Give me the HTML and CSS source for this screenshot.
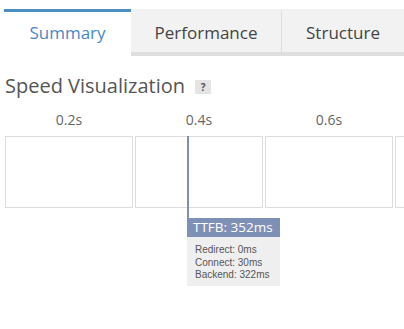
FILE: index.html
```html
<!DOCTYPE html>
<html>
<head>
<meta charset="utf-8">
<link rel="stylesheet" href="styles.css">
</head>
<body>
<div class="tabs">
  <div class="tab active">Summary</div>
  <div class="tab">Performance</div>
  <div class="tab last">Structure</div>
</div>
<h2 class="heading">Speed Visualization <span class="help">?</span></h2>
<div class="timeline">
  <div class="labels">
    <div class="label">0.2s</div>
    <div class="label">0.4s</div>
    <div class="label">0.6s</div>
  </div>
  <div class="frames">
    <div class="frame"></div>
    <div class="frame"></div>
    <div class="frame"></div>
    <div class="frame"></div>
  </div>
  <div class="marker"></div>
  <div class="tooltip">
    <div class="tip-head">TTFB: 352ms</div>
    <div class="tip-body">
      <div>Redirect: 0ms</div>
      <div>Connect: 30ms</div>
      <div>Backend: 322ms</div>
    </div>
  </div>
</div>
</body>
</html>
```
FILE: styles.css
```css
html, body { margin: 0; padding: 0; background: #fff; overflow: hidden; }
body { width: 404px; height: 329px; font-family: "Open Sans", "Noto Sans", sans-serif; color: #555; }
.tabs { display: flex; margin-top: 9px; padding-left: 4px; }
.tab { height: 40px; display: flex; align-items: center; justify-content: center; font-size: 17px; color: #444; background: #f2f2f2; border-bottom: 4px solid #dedede; border-top: 3px solid transparent; }
.tab.active { width: 127px; background: #fff; color: #4a89bf; border-top-color: #4a8fc0; border-bottom-color: #fff; }
.tab:nth-child(2) { width: 150px; border-right: 1px solid #dcdcdc; }
.tab.last { flex: 1; }
.heading { margin: 18px 0 0 5px; font-size: 20px; font-weight: normal; color: #555; line-height: 24px; display: flex; align-items: center; }
.help { display: inline-block; width: 16px; height: 14px; background: #e4e4e4; color: #555; font-size: 10px; font-weight: bold; line-height: 14px; text-align: center; margin-left: 10px; margin-top: 2px; }
.timeline { position: relative; margin-top: 12px; padding-left: 5px; }
.labels { display: flex; gap: 2px; }
.label { width: 128px; text-align: center; font-size: 14px; color: #666; line-height: 20px; }
.frames { display: flex; gap: 2px; margin-top: 6px; overflow: hidden; }
.frame { flex: none; width: 126px; height: 70px; border: 1px solid #dddddd; background: #fff; }
.marker { position: absolute; left: 187px; top: 26px; width: 2px; height: 82px; background: #8090b3; }
.tooltip { position: absolute; left: 187px; top: 108px; width: 93px; background: #efefef; }
.tip-head { background: #7f90b7; color: #fff; font-size: 13.5px; line-height: 19px; padding-left: 6px; }
.tip-body { font-family: "Liberation Sans", Arial, sans-serif; font-size: 10px; color: #555; line-height: 12.5px; padding: 7px 0 4px 8px; }
```
